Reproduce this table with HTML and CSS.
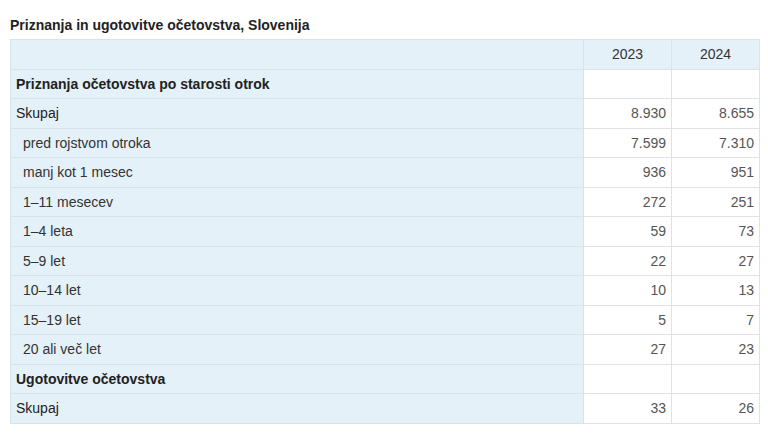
FILE: index.html
```html
<!DOCTYPE html>
<html lang="sl">
<head>
<meta charset="utf-8">
<title>Priznanja in ugotovitve očetovstva</title>
<link rel="stylesheet" href="styles.css">
</head>
<body>
<div class="wrap">
  <h1 class="title">Priznanja in ugotovitve očetovstva, Slovenija</h1>
  <table class="data">
    <colgroup><col class="c-label"><col class="c-num"><col class="c-num"></colgroup>
    <thead>
      <tr><th class="lab"></th><th>2023</th><th>2024</th></tr>
    </thead>
    <tbody>
      <tr><td class="lab grp">Priznanja očetovstva po starosti otrok</td><td></td><td></td></tr>
      <tr><td class="lab">Skupaj</td><td>8.930</td><td>8.655</td></tr>
      <tr><td class="lab sub">pred rojstvom otroka</td><td>7.599</td><td>7.310</td></tr>
      <tr><td class="lab sub">manj kot 1 mesec</td><td>936</td><td>951</td></tr>
      <tr><td class="lab sub">1–11 mesecev</td><td>272</td><td>251</td></tr>
      <tr><td class="lab sub">1–4 leta</td><td>59</td><td>73</td></tr>
      <tr><td class="lab sub">5–9 let</td><td>22</td><td>27</td></tr>
      <tr><td class="lab sub">10–14 let</td><td>10</td><td>13</td></tr>
      <tr><td class="lab sub">15–19 let</td><td>5</td><td>7</td></tr>
      <tr><td class="lab sub">20 ali več let</td><td>27</td><td>23</td></tr>
      <tr><td class="lab grp">Ugotovitve očetovstva</td><td></td><td></td></tr>
      <tr><td class="lab">Skupaj</td><td>33</td><td>26</td></tr>
    </tbody>
  </table>
</div>
</body>
</html>
```
FILE: styles.css
```css
html, body {
  margin: 0;
  padding: 0;
  background: #ffffff;
}
body {
  font-family: "Liberation Sans", Arial, sans-serif;
  font-size: 14px;
  color: #222;
}
.wrap {
  padding: 17px 9px 0 10px;
}
.title {
  margin: 0 0 6px 0;
  font-size: 14px;
  font-weight: bold;
  color: #222;
  line-height: 16px;
}
.data {
  border-collapse: collapse;
  width: 749px;
  table-layout: fixed;
}
.c-label { width: 573px; }
.c-num { width: 88px; }
.data th, .data td {
  height: 29.5px;
  padding: 0 5px;
  border: 1px solid #dde3e7;
  box-sizing: border-box;
  font-weight: normal;
  text-align: right;
  color: #555;
  vertical-align: middle;
  line-height: 16px;
}
.data thead th {
  background: #e4f1f9;
  text-align: center;
  color: #333;
}
.data td.lab, .data th.lab {
  background: #e4f1f9;
  text-align: left;
  color: #222;
  border-color: #d6e3eb;
}
.data td.sub {
  padding-left: 12px;
  color: #333;
}
.data td.grp {
  font-weight: bold;
  color: #222;
}
```
